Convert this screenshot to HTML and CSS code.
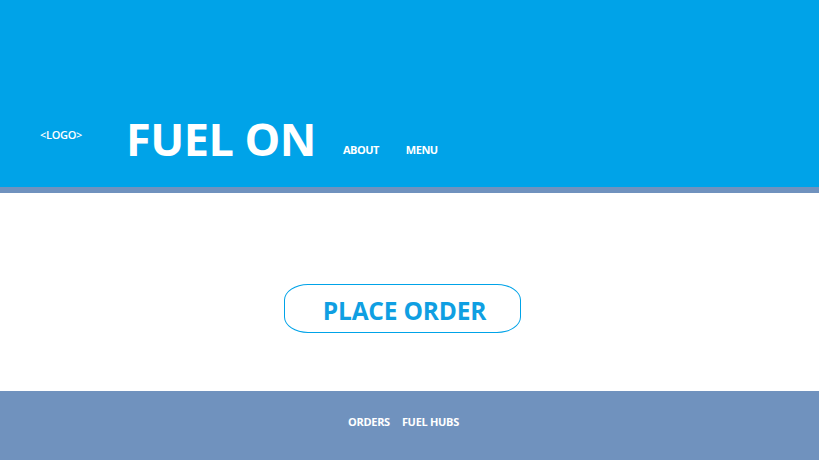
FILE: index.html
```html
<!DOCTYPE html>
<html>
<head>
<meta charset="utf-8">
<link rel="stylesheet" href="styles.css">
</head>
<body>
<header class="header">
  <div class="logo">&lt;LOGO&gt;</div>
  <h1 class="title">FUEL ON</h1>
  <nav class="nav">
    <a class="nav-link">ABOUT</a>
    <a class="nav-link">MENU</a>
  </nav>
</header>
<div class="divider"></div>
<main class="main">
  <button class="order-btn">PLACE ORDER</button>
</main>
<footer class="footer">
  <a class="foot-link">ORDERS</a>
  <a class="foot-link">FUEL HUBS</a>
</footer>
</body>
</html>
```
FILE: styles.css
```css
* { box-sizing: border-box; }
html, body { margin: 0; padding: 0; }
body {
  width: 819px;
  height: 460px;
  overflow: hidden;
  font-family: "Open Sans", "Noto Sans", sans-serif;
  background: #fff;
  display: flex;
  flex-direction: column;
}
.header {
  height: 187px;
  background: #00a3e8;
  color: #fff;
  display: flex;
  align-items: flex-start;
  padding: 110px 0 0 40px;
}
.logo {
  font-size: 11px;
  font-weight: 600;
  letter-spacing: -0.3px;
  margin-top: 17px;
  width: 86px;
}
.title {
  margin: 0;
  font-size: 45px;
  font-weight: 700;
  line-height: 58px;
  letter-spacing: -0.5px;
}
.nav {
  display: flex;
  gap: 27px;
  margin: 32px 0 0 27px;
}
.nav-link {
  font-size: 11px;
  font-weight: 700;
  letter-spacing: -0.5px;
}
.divider {
  height: 6px;
  background: #7092be;
}
.main {
  height: 198px;
  display: flex;
  justify-content: center;
  padding: 91px 0 0 0;
}
.order-btn {
  width: 237px;
  height: 49px;
  margin-right: 14px;
  border: 1px solid #00a3e8;
  border-radius: 24px / 16px;
  background: #fff;
  color: #0f9fe2;
  font-family: "Open Sans", "Noto Sans", sans-serif;
  font-size: 24.5px;
  font-weight: 700;
  letter-spacing: -0.2px;
  padding: 3px 0 0 4px;
}
.footer {
  flex: 1;
  background: #7092be;
  display: flex;
  justify-content: center;
  align-items: flex-start;
  gap: 12px;
  padding: 23px 12px 0 0;
}
.foot-link {
  color: #fff;
  font-size: 11px;
  font-weight: 700;
  letter-spacing: -0.3px;
}
```
